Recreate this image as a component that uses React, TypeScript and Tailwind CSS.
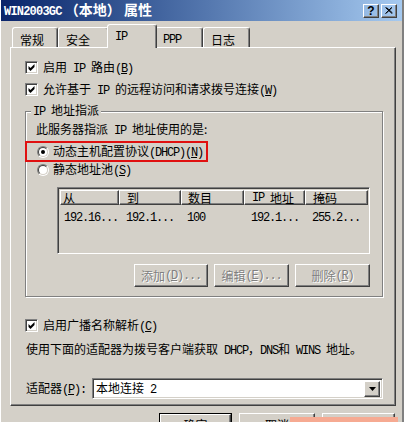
import React from "react";

const raised =
  "border border-t-white border-l-white border-r-[#404040] border-b-[#404040] shadow-[inset_-1px_-1px_0_#808080]";
const sunken =
  "border border-t-[#808080] border-l-[#808080] border-r-white border-b-white shadow-[inset_1px_1px_0_#404040,inset_-1px_-1px_0_#d4d0c8]";

// latin runs in a narrow mono face, 6px per char like the bitmap font
const L = ({ children }: { children: React.ReactNode }) => (
  <span className="font-['Liberation_Mono',monospace] tracking-[-1.2px] whitespace-pre">{children}</span>
);

const Check = () => (
  <span className={`w-[13px] h-[13px] shrink-0 bg-white flex items-center justify-center ${sunken}`}>
    <svg width="9" height="9" viewBox="0 0 9 9" className="translate-x-[0.5px]">
      <polygon points="1,3 3,5 7,1 7,4 3,8 1,6" fill="#000" />
    </svg>
  </span>
);

const Radio = ({ on }: { on?: boolean }) => (
  <span className="w-[12px] h-[12px] shrink-0 rounded-full border border-t-[#808080] border-l-[#808080] border-r-white border-b-white">
    <span className="w-full h-full rounded-full bg-white border border-t-[#404040] border-l-[#404040] border-r-[#d4d0c8] border-b-[#d4d0c8] flex items-center justify-center">
      {on && <span className="w-[4px] h-[4px] rounded-full bg-black" />}
    </span>
  </span>
);

const Btn = ({ w, children, off }: { w: string; children: React.ReactNode; off?: boolean }) => (
  <div
    className={`${w} h-[23px] flex items-center justify-center ${raised} ${
      off ? "text-[#808080] [text-shadow:1px_1px_0_#fff]" : ""
    }`}
  >
    {children}
  </div>
);

const Tab = ({ w, children, active }: { w: string; children: React.ReactNode; active?: boolean }) => (
  <div
    className={`${w} flex items-start pl-[7px] rounded-t-[3px] border-t border-l border-t-white border-l-white border-r border-r-[#404040] shadow-[inset_-1px_0_0_#808080] bg-[#d4d0c8] ${
      active ? "h-[24px] -mx-[2px] mb-[-1px] z-10 pt-[5px] relative" : "h-[20px] pt-[5px]"
    }`}
  >
    {children}
  </div>
);

const Head = ({ w, children, pl }: { w: string; children: React.ReactNode; pl: string }) => (
  <div className={`${w} ${pl} h-[15px] flex items-center ${raised}`}>{children}</div>
);

export default function App() {
  const cols = [
    { w: "w-[59px]", pl: "pl-[2px]", h: "从", v: "192.16..." },
    { w: "w-[62px]", pl: "pl-[7px]", h: "到", v: "192.1..." },
    { w: "w-[63px]", pl: "pl-[6px]", h: "数目", v: "100" },
    { w: "w-[61px]", pl: "pl-[7px]", h: <><L>IP </L>地址</>, v: "192.1..." },
    { w: "w-[63px]", pl: "pl-[7px]", h: "掩码", v: "255.2..." },
  ];

  return (
    <div className="relative w-[404px] h-[422px] overflow-hidden bg-[#d4d0c8] border-l border-l-white border-r-2 border-r-[#808080] flex flex-col font-['Noto_Sans_CJK_SC',sans-serif] text-[12px] leading-[14px] text-black">
      {/* title bar */}
      <div className="flex items-center h-[21px] shrink-0 pl-[3px] pr-[5px] bg-linear-to-r from-[#0a246a] to-[#a6caf0]">
        <span className="text-white font-bold text-[14px] leading-[16px]">
          <span className="font-['Liberation_Mono',monospace] text-[12px] tracking-[-0.8px]">WIN2003GC</span> （本地） 属性
        </span>
        <div className="ml-auto flex gap-[2px]">
          <div className={`w-[16px] h-[14px] flex items-center justify-center font-['Liberation_Sans',sans-serif] font-bold text-[12px] ${raised}`}>
            ?
          </div>
          <div className={`w-[16px] h-[14px] flex items-center justify-center ${raised}`}>
            <svg width="8" height="7" viewBox="0 0 8 7">
              <path d="M0.5 0.5 L7 6.5 M1.5 0.5 L7.5 6 M7 0.5 L0.5 6.5 M6.5 0.5 L1 6.5" stroke="#000" strokeWidth="1" />
            </svg>
          </div>
        </div>
      </div>

      {/* tabs */}
      <div className="flex items-end h-[26px] shrink-0 pl-[11px]">
        <Tab w="w-[46px]">常规</Tab>
        <Tab w="w-[51px]">安全</Tab>
        <Tab w="w-[50px]" active>
          <span className="-mt-[2px]"><L>IP</L></span>
        </Tab>
        <Tab w="w-[48px]"><L>PPP</L></Tab>
        <Tab w="w-[47px]">日志</Tab>
      </div>

      {/* tab panel */}
      <div className="ml-[9px] w-[386px] h-[359px] shrink-0 border border-t-white border-l-white border-r-[#404040] border-b-[#404040] shadow-[inset_-1px_-1px_0_#808080] pl-[14px] pt-[13px] flex flex-col">
        <div className="flex items-center gap-[5px] h-[13px]">
          <Check />
          <span>启用<L> IP </L>路由<L>(<u>B</u>)</L></span>
        </div>
        <div className="flex items-center gap-[5px] h-[13px] mt-[9px]">
          <Check />
          <span>允许基于<L> IP </L>的远程访问和请求拨号连接<L>(<u>W</u>)</L></span>
        </div>

        <fieldset className="mt-[7px] w-[358px] border border-[#808080] shadow-[inset_1px_1px_0_#fff,1px_1px_0_#fff] px-[10px] pb-[9px] pt-[3px] flex flex-col">
          <legend className="ml-[-5px] px-[2px] bg-[#d4d0c8]"><L>IP </L>地址指派</legend>
          <div>此服务器指派<L> IP </L>地址使用的是:</div>
          <div className="mt-[3px] ml-[-11px] w-[183px] h-[21px] border-2 border-[#e01010] pl-[10px] flex items-center gap-[4px]">
            <Radio on />
            <span>动态主机配置协议<L>(DHCP)(<u>N</u>)</L></span>
          </div>
          <div className="mt-[2px] ml-[1px] flex items-center gap-[4px] h-[12px]">
            <Radio />
            <span>静态地址池<L>(<u>S</u>)</L></span>
          </div>

          <div className={`mt-[11px] ml-[21px] w-[313px] h-[67px] p-[1px] ${sunken}`}>
            <div className="flex pl-[1px] pt-[1px]">
              {cols.map((c, i) => (
                <Head key={i} w={c.w} pl={c.pl}>{c.h}</Head>
              ))}
            </div>
            <div className="flex pl-[1px] mt-[4px]">
              {cols.map((c, i) => (
                <div key={i} className={`${c.w} ${c.pl} pl-[4px]`}>
                  <L>{c.v}</L>
                </div>
              ))}
            </div>
          </div>

          <div className="mt-[10px] flex justify-end gap-[6px] w-[334px]">
            <Btn w="w-[74px]" off>添加<L>(<u>D</u>)...</L></Btn>
            <Btn w="w-[75px]" off>编辑<L>(<u>E</u>)...</L></Btn>
            <Btn w="w-[75px]" off>删除<L>(<u>R</u>)</L></Btn>
          </div>
        </fieldset>

        <div className="flex items-center gap-[5px] h-[13px] mt-[22px]">
          <Check />
          <span>启用广播名称解析<L>(<u>C</u>)</L></span>
        </div>
        <div className="mt-[10px] ml-[1px]">
          使用下面的适配器为拨号客户端获取<L> DHCP</L>，<L>DNS</L>和<L> WINS </L>地址。
        </div>

        <div className="mt-[20px] ml-[1px] flex items-center gap-[2px]">
          <span className="w-[64px]">适配器<L>(<u>P</u>):</L></span>
          <div className={`w-[291px] h-[21px] bg-white flex items-center pl-[3px] pr-[2px] ${sunken}`}>
            <span>本地连接<L> 2</L></span>
            <div className={`ml-auto w-[16px] h-[16px] bg-[#d4d0c8] flex items-center justify-center ${raised}`}>
              <svg width="7" height="4" viewBox="0 0 7 4">
                <polygon points="0,0 7,0 3.5,4" fill="#000" />
              </svg>
            </div>
          </div>
        </div>
      </div>

      {/* dialog buttons */}
      <div className="flex justify-end gap-[7px] pr-[7px] mt-[7px]">
        <div className="w-[73px] h-[23px] border border-black">
          <div className={`w-full h-full flex items-center justify-center ${raised}`}>确定</div>
        </div>
        <Btn w="w-[76px]">取消</Btn>
        <Btn w="w-[73px]">应用<L>(<u>A</u>)</L></Btn>
      </div>

      <div className="absolute left-[289px] top-[417px] w-[108px] h-[6px] bg-[#f6aa92]" />
    </div>
  );
}
